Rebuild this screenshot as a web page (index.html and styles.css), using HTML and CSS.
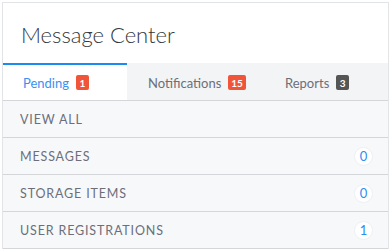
FILE: index.html
```html
<!DOCTYPE html>
<html>
<head>
<meta charset="utf-8">
<link rel="stylesheet" href="styles.css">
</head>
<body>
<div class="card">
  <div class="header"><h1 class="title">Message Center</h1></div>
  <div class="tabs">
    <div class="tab tab-pending active">Pending <span class="badge badge-red">1</span></div>
    <div class="tab tab-notif">Notifications <span class="badge badge-red">15</span></div>
    <div class="tab tab-reports">Reports <span class="badge badge-dark">3</span></div>
  </div>
  <ul class="list">
    <li class="row"><span class="label">VIEW ALL</span></li>
    <li class="row"><span class="label">MESSAGES</span><span class="count">0</span></li>
    <li class="row"><span class="label">STORAGE ITEMS</span><span class="count">0</span></li>
    <li class="row"><span class="label">USER REGISTRATIONS</span><span class="count">1</span></li>
  </ul>
</div>
</body>
</html>
```
FILE: styles.css
```css
* { box-sizing: border-box; }
html, body { margin: 0; padding: 0; background: #ffffff; }
body {
  padding: 2px 1px 0 2px;
  font-family: Lato, "Open Sans", sans-serif;
}
.card {
  border: 1px solid #e3e4e8;
  border-bottom: none;
  background: #f7f8fa;
}
.header {
  height: 60px;
  background: #ffffff;
  display: flex;
  align-items: center;
  padding-left: 18px;
}
.title {
  margin: 0;
  font-weight: 300;
  font-size: 22px;
  color: #333740;
  padding-top: 2px;
}
.tabs {
  display: flex;
  height: 38px;
  background: #f3f4f6;
  border-bottom: 1px solid #d5d6da;
}
.tab {
  display: flex;
  align-items: center;
  padding-left: 21px;
  font-size: 13px;
  color: #6b6f78;
  border-top: 2px solid transparent;
}
.tab-pending { flex: 0 0 124px; padding-left: 20px; }
.tab-notif { flex: 0 0 137px; }
.tab-reports { flex: 1 1 auto; }
.tab.active {
  background: #ffffff;
  border-top-color: #1a8cef;
  color: #3d8ff0;
}
.badge {
  display: inline-flex;
  align-items: center;
  justify-content: center;
  height: 15px;
  min-width: 13px;
  padding: 0 3px;
  margin-left: 7px;
  border-radius: 2px;
  color: #ffffff;
  font-size: 10px;
  font-weight: 700;
}
.badge-red { background: #f0553a; }
.badge-dark { background: #555555; }
.list { list-style: none; margin: 0; padding: 0; }
.row {
  height: 37px;
  border-bottom: 1px solid #d5d6da;
  display: flex;
  align-items: center;
  justify-content: space-between;
  padding: 0 15px 0 17px;
}
.label {
  font-size: 12.5px;
  letter-spacing: 0.85px;
  color: #6b6f7a;
}
.count {
  width: 19px;
  height: 19px;
  border-radius: 50%;
  background: #ffffff;
  border: 1px solid #eef0f3;
  display: flex;
  align-items: center;
  justify-content: center;
  font-size: 13px;
  color: #2e8ef0;
}
```
